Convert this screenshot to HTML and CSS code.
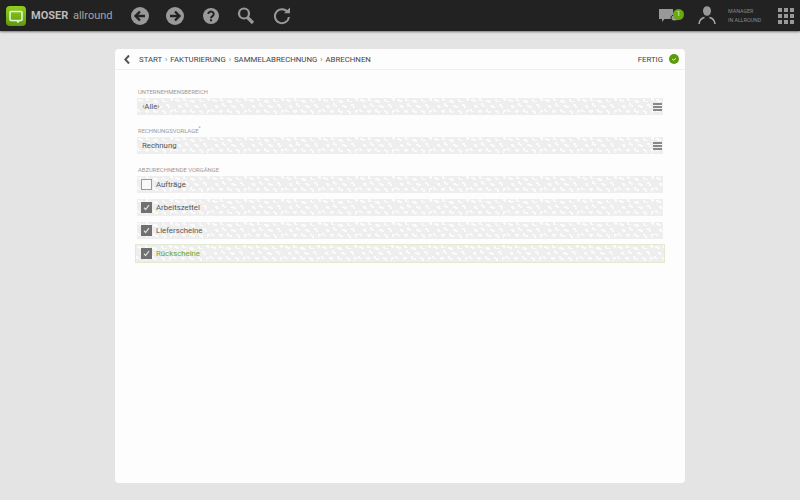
FILE: index.html
```html
<!DOCTYPE html>
<html lang="de">
<head>
  <meta charset="UTF-8">
  <title>Abrechnen</title>
  <link rel="stylesheet" href="styles.css">
</head>
<body>
<header class="topbar">
  <div class="logo">
    <svg width="20" height="20" viewBox="0 0 20 20"><path d="M5 5.500h10a1 1 0 0 1 1 1v7a1 1 0 0 1-1 1h-2l-1 1.500-1-1.500H5a1 1 0 0 1-1-1v-7a1 1 0 0 1 1-1z" fill="none" stroke="#eef6dc" stroke-width="1.500"/></svg>
  </div>
  <div class="brand"><b>MOSER</b> allround</div>
  <nav class="tools">
    <svg width="18" height="18" viewBox="0 0 18 18"><circle cx="9" cy="9" r="9" fill="#999"/><path d="M14 9H5M9 4.500 4.500 9 9 13.500" fill="none" stroke="#222" stroke-width="2.400"/></svg>
    <svg width="18" height="18" viewBox="0 0 18 18"><circle cx="9" cy="9" r="9" fill="#999"/><path d="M4 9h9M9 4.500 13.500 9 9 13.500" fill="none" stroke="#222" stroke-width="2.400"/></svg>
    <svg width="18" height="18" viewBox="0 0 18 18"><circle cx="9" cy="9" r="8" fill="#999"/><path d="M6.300 7a2.700 2.500 0 1 1 4.200 2.100C9.500 9.800 9 10 9 11.200" fill="none" stroke="#222" stroke-width="2"/><rect x="8" y="12.300" width="2" height="2" fill="#222"/></svg>
    <svg width="18" height="18" viewBox="0 0 18 18"><circle cx="7" cy="6.500" r="5" fill="none" stroke="#999" stroke-width="2.200"/><path d="M10.500 10.500 16 16" stroke="#999" stroke-width="3.200"/></svg>
    <svg width="18" height="18" viewBox="0 0 18 18"><path d="M14.600 5a7 7 0 1 0 1.300 5" fill="none" stroke="#999" stroke-width="2"/><path d="M11 6.300h6V.500z" fill="#999"/></svg>
  </nav>
  <div class="status">
    <div class="chat">
      <svg width="21" height="16" viewBox="0 0 21 16"><path d="M0 1h14v10H5.500L3 14v-3H0z" fill="#999"/><path d="M15.500 7c2.500 0 4 1.300 4 3s-1.500 3-4 3-3.500-1.300-3.500-3 1-3 3.500-3z" fill="#999" stroke="#222"/></svg>
      <span class="badge">1</span>
    </div>
    <svg class="person" width="18" height="19" viewBox="0 0 18 19"><ellipse cx="9" cy="5" rx="4" ry="4.800" fill="#999"/><path d="M1 18c.5-4 3-6 5.500-6.500M17 18c-.5-4-3-6-5.500-6.500" fill="none" stroke="#aaa" stroke-width="1.500"/></svg>
    <div class="user">MANAGER<br>IN ALLROUND</div>
    <div class="apps">
      <i></i><i></i><i></i><i></i><i></i><i></i><i></i><i></i><i></i>
    </div>
  </div>
</header>

<main class="card">
  <div class="card-head">
    <svg width="6" height="9" viewBox="0 0 6 9"><path d="M5 .5 1.300 4.500 5 8.500" fill="none" stroke="#555" stroke-width="2"/></svg>
    <div class="crumbs">START <s>›</s> FAKTURIERUNG <s>›</s> SAMMELABRECHNUNG <s>›</s> ABRECHNEN</div>
    <div class="done">FERTIG
      <svg width="10" height="10" viewBox="0 0 10 10"><circle cx="5" cy="5" r="5" fill="#5c9a0c"/><path d="M3 4.800 4.700 6.300 7 4.300" fill="none" stroke="#e6f2d0" stroke-width="1"/></svg>
    </div>
  </div>
  <div class="card-body">
    <label class="caption">UNTERNEHMENSBEREICH</label>
    <div class="field"><span>‹Alle›</span><div class="burger"><i></i><i></i><i></i></div></div>
    <label class="caption">RECHNUNGSVORLAGE<sup>*</sup></label>
    <div class="field"><span>Rechnung</span><div class="burger"><i></i><i></i><i></i></div></div>
    <label class="caption">ABZURECHNENDE VORGÄNGE</label>
    <div class="checks">
      <div class="check"><span class="box"></span>Aufträge</div>
      <div class="check"><span class="box on"><svg width="9" height="9" viewBox="0 0 8 8"><path d="M1.800 4.200 3.200 5.800 6.200 1.800" fill="none" stroke="#ddd" stroke-width="1.100"/></svg></span>Arbeitszettel</div>
      <div class="check"><span class="box on"><svg width="9" height="9" viewBox="0 0 8 8"><path d="M1.800 4.200 3.200 5.800 6.200 1.800" fill="none" stroke="#ddd" stroke-width="1.100"/></svg></span>Lieferscheine</div>
      <div class="check active"><span class="box on"><svg width="9" height="9" viewBox="0 0 8 8"><path d="M1.800 4.200 3.200 5.800 6.200 1.800" fill="none" stroke="#ddd" stroke-width="1.100"/></svg></span>Rückscheine</div>
    </div>
  </div>
</main>
</body>
</html>
```

FILE: styles.css
```css
body {
  margin: 0;
  height: 500px;
  overflow: hidden;
  background: #e4e4e4;
  font-family: 'Roboto', sans-serif;
  color: #444;
}
.topbar {
  display: flex;
  align-items: center;
  height: 31px;
  padding: 0 6px;
  background: #222;
  box-shadow: 0 1px 2px #777;
}
.logo {
  display: flex;
  align-items: center;
  justify-content: center;
  width: 20px;
  height: 20px;
  border-radius: 4px;
  background: linear-gradient(#8fd01c, #5c9a0c);
}
.brand {
  margin-left: 5px;
  font-size: 11px;
  color: #a5a5a5;
}
.brand b {
  margin-right: 2px;
  color: #bbb;
}
.tools {
  display: flex;
  align-items: center;
  gap: 17.500px;
  margin-left: 18px;
}
.status {
  display: flex;
  align-items: center;
  margin-left: auto;
}
.chat {
  display: flex;
  align-items: center;
}
.badge {
  width: 11px;
  height: 11px;
  margin-left: -7px;
  margin-top: -2px;
  border-radius: 50%;
  background: #6aa80e;
  color: #e8f3d8;
  font-size: 7px;
  line-height: 11px;
  text-align: center;
}
.person {
  margin-left: 14px;
}
.user {
  width: 50px;
  margin-left: 12px;
  font-size: 5.300px;
  line-height: 9px;
  color: #888;
}
.apps {
  display: grid;
  grid-template-columns: repeat(3, 4px);
  gap: 2px;
}
.apps i {
  height: 4px;
  background: #999;
}
.card {
  width: 570px;
  height: 434px;
  margin: 18px auto 0;
  border-radius: 4px;
  background: #fdfdfd;
}
.card-head {
  display: flex;
  align-items: center;
  height: 20px;
  padding: 0 6px 0 9px;
  border-bottom: 1px solid #eee;
  font-size: 7.800px;
  color: #444;
}
.crumbs {
  margin-left: 9px;
}
.crumbs s {
  margin: 0 1px;
  text-decoration: none;
  color: #777;
}
.done {
  display: flex;
  align-items: center;
  gap: 6px;
  margin-left: auto;
}
.card-body {
  padding: 18px 22px 0;
}
.caption {
  display: block;
  height: 10px;
  padding-left: 1px;
  font-size: 5.900px;
  line-height: 8px;
  color: #999;
}
.caption sup {
  font-size: 5px;
  line-height: 0;
}
/* speckled backdrop of the fields */
.field,
.check {
  display: flex;
  align-items: center;
  background-color: #eee;
  background-image: url("data:image/svg+xml,%3Csvg xmlns='http://www.w3.org/2000/svg' width='37' height='17' fill='%23fbfbfb'%3E%3Cpath d='M1 1h3v1h2v2H3V3H1zM9 0h2v2h2v1H9zM16 2h4v1h1v2h-3V4h-2zM25 1h2v2h3v1h-4V3h-1zM33 0h3v3h-2V2h-1zM4 7h3v2h1v1H5V9H4zM11 5h2v2h2v2h-2V8h-2zM20 7h3v1h2v2h-3V9h-2zM29 6h3v2h1v2h-2V8h-2zM0 11h2v2h2v1H1v-1H0zM8 12h4v2h-1v1H9v-1H8zM16 11h2v2h3v2h-3v-1h-2zM25 12h2v1h2v3h-2v-2h-2zM33 12h3v2h-2v2h-1z'/%3E%3C/svg%3E");
  font-size: 7.800px;
  color: #555;
}
.field {
  height: 17px;
  margin-bottom: 12px;
  padding-left: 5px;
}
.field span {
  flex: 1;
}
.burger {
  display: grid;
  gap: 1px;
  width: 9px;
  margin-right: 1px;
}
.burger i {
  height: 2px;
  background: #888;
}
.checks {
  display: flex;
  flex-direction: column;
  gap: 6px;
}
.check {
  height: 17px;
  padding-left: 4px;
}
.check.active {
  height: 19px;
  margin: -1px -2px 0;
  padding-left: 5px;
  border: 1px solid #e2ead0;
  box-sizing: border-box;
  color: #6aa80e;
}
.box {
  display: flex;
  align-items: center;
  justify-content: center;
  box-sizing: border-box;
  width: 11px;
  height: 11px;
  margin-right: 4px;
  border: 1px solid #999;
  background: #f8f8f8;
}
.box.on {
  border-color: #707070;
  background: #707070;
}
```
